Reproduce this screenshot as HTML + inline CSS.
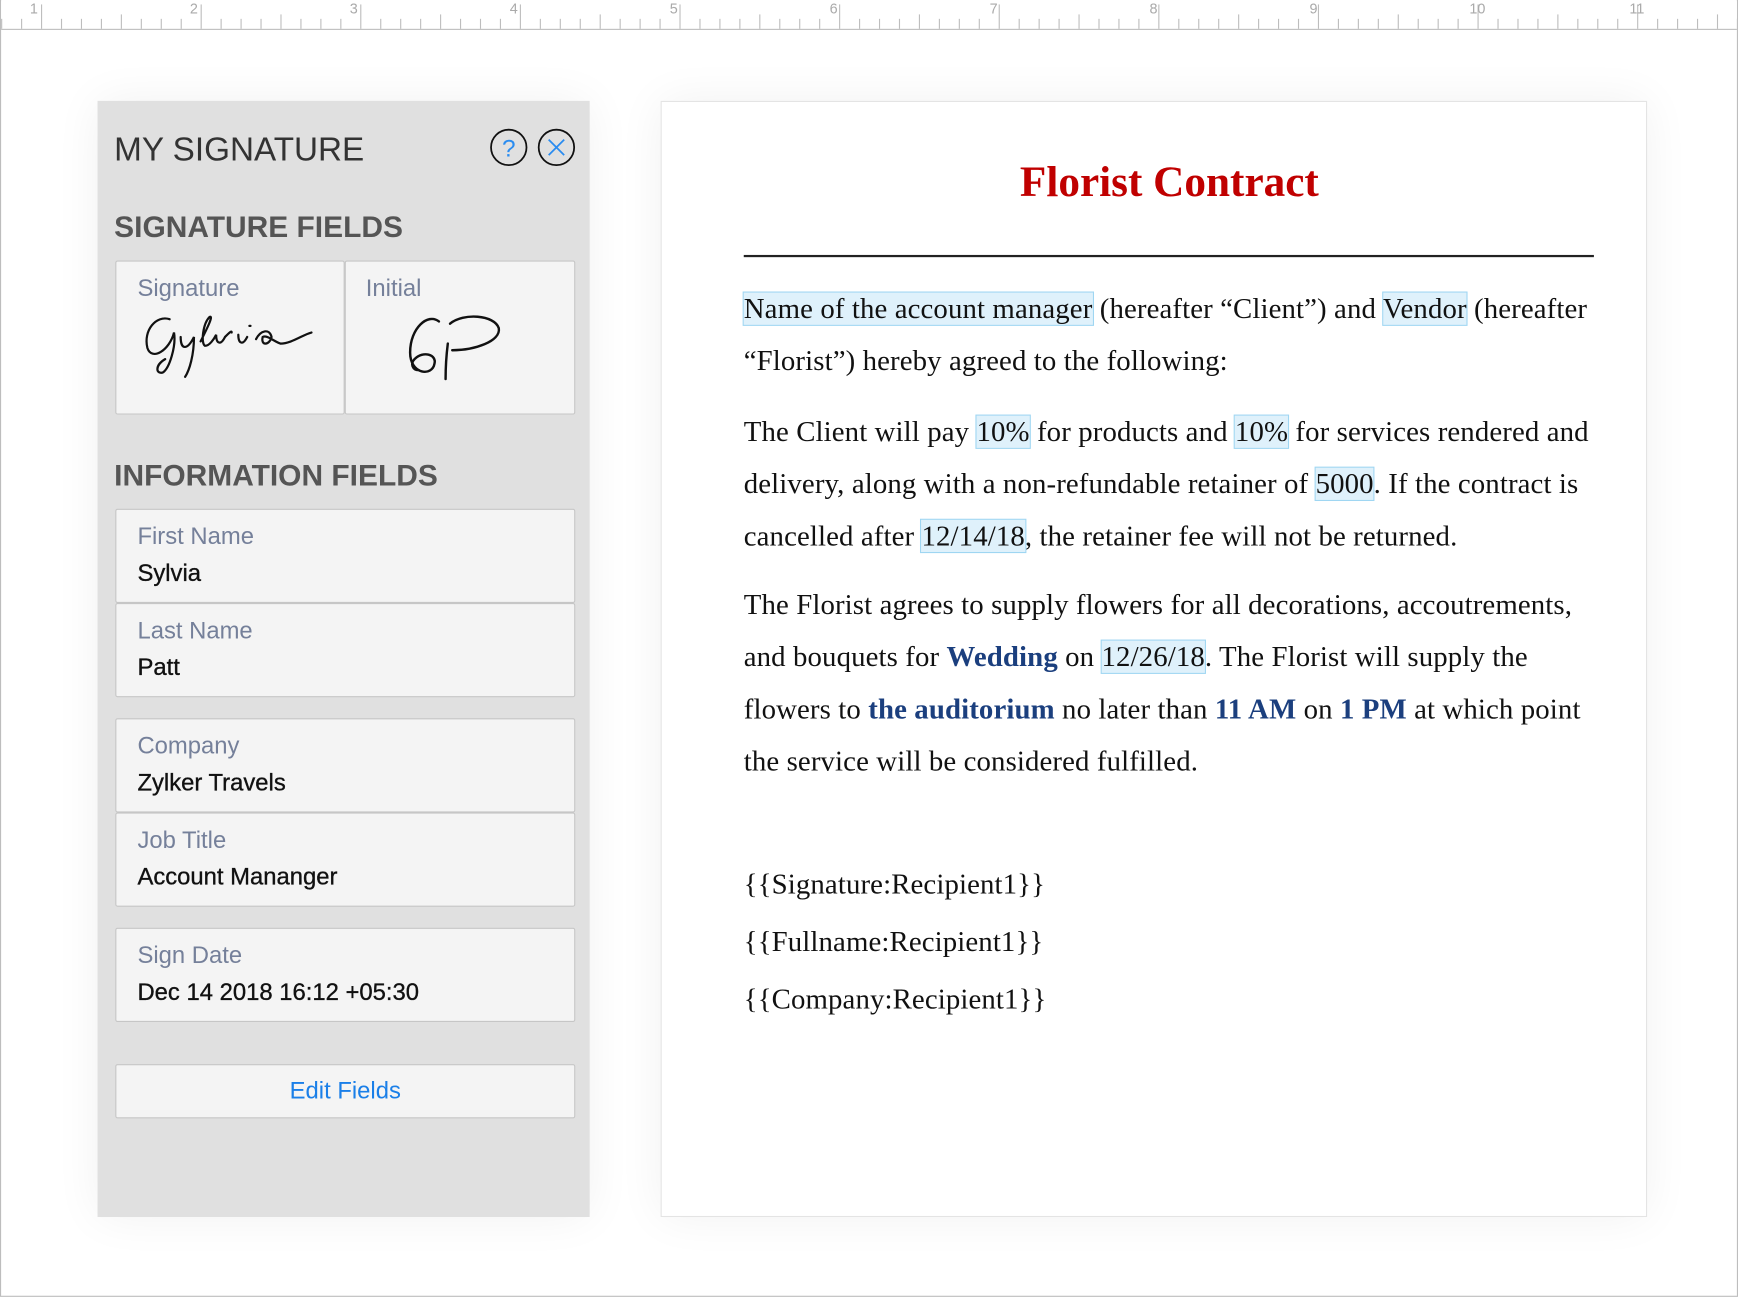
<!DOCTYPE html>
<html><head><meta charset="utf-8"><style>
html,body{margin:0;padding:0;background:#fff;width:1738px;height:1297px;overflow:hidden}
#w{position:absolute;left:0;top:0;width:1568px;height:1170px;transform:scale(1.10842);transform-origin:0 0;font-family:"Liberation Sans",sans-serif}
.frame{position:absolute;left:0;top:0;width:1566px;height:1168px;border:1px solid #bdbdbd}
.ruler{position:absolute;left:1px;top:0;width:1566px;height:26px;border-bottom:1px solid #bdbdbd;background:#fff}
.tick{position:absolute;bottom:0;width:1px;background:#bdbdbd}
.num{position:absolute;top:0;font-size:13px;color:#aaa}
.panel{position:absolute;left:88px;top:91px;width:444px;height:1007px;background:#e0e0e0;box-shadow:0 0 40px rgba(0,0,0,0.06)}
.t{position:absolute;white-space:nowrap}
.box{position:absolute;background:#f4f4f4;border:1px solid #c6c6c6;box-sizing:border-box;border-radius:2px}
.lab{position:absolute;left:19px;top:12px;font-size:21.5px;color:#75809a}
.val{position:absolute;left:19px;top:45px;font-size:21.5px;color:#111;-webkit-text-stroke:0.3px #111}
.doc{position:absolute;left:596px;top:91px;width:890px;height:1007px;background:#fff;border:1px solid #e4e4e4;box-sizing:border-box;box-shadow:0 0 40px rgba(0,0,0,0.06)}
.p{position:absolute;left:671px;font-family:"Liberation Serif",serif;font-size:26px;color:#111;white-space:nowrap;letter-spacing:0.1px}
.h{background:#dff1fb;outline:1px solid #9fd6f2}
.b{color:#1b3f7e;font-weight:bold}
</style></head><body><div id="w">
<div class="frame"></div>
<div class="ruler" id="r"></div>
<div class="panel"></div>
<div class="t" style="left:103px;top:119px;font-size:30px;color:#333;letter-spacing:0px">MY SIGNATURE</div>
<svg class="t" style="left:440px;top:114px" width="84" height="40">
<circle cx="19" cy="19" r="16" fill="none" stroke="#111" stroke-width="1.6"/>
<text x="19" y="27" text-anchor="middle" font-size="22" fill="#2a8cf0" font-family="Liberation Sans">?</text>
<circle cx="62" cy="19" r="16" fill="none" stroke="#111" stroke-width="1.6"/>
<path d="M55 12 L69 26 M69 12 L55 26" stroke="#2a8cf0" stroke-width="1.6"/>
</svg>
<div class="t" style="left:103px;top:190px;font-size:27px;color:#555;font-weight:bold">SIGNATURE FIELDS</div>
<div class="box" style="left:104px;top:235px;width:207px;height:139px"><div class="lab">Signature</div>
<svg style="position:absolute;left:18px;top:40px" width="180" height="70"><path d="M30 12 C18 8 6 22 10 38 C14 50 30 40 34 24 C36 36 30 56 24 60 C18 62 16 54 26 48 M40 28 C40 40 46 40 52 28 C52 44 48 58 44 64 M58 32 C64 20 70 8 66 10 C60 16 58 34 62 36 C66 36 70 30 72 26 C72 34 76 36 80 28 C84 24 86 22 86 24 M92 26 C92 34 96 36 100 28 M102 18 L103 18 M108 30 C112 22 120 20 122 28 C120 36 112 36 114 28 C118 26 124 32 130 34 C140 34 150 26 158 24" fill="none" stroke="#111" stroke-width="2" stroke-linecap="round"/></svg></div>
<div class="box" style="left:311px;top:235px;width:208px;height:139px"><div class="lab" style="left:18px">Initial</div>
<svg style="position:absolute;left:50px;top:40px" width="120" height="75"><path d="M34 14 C24 6 8 20 8 42 C8 62 28 64 30 52 C32 44 20 40 12 48 C8 52 10 58 16 58 M42 34 C40 50 40 60 40 66 M44 16 C56 6 84 8 88 20 C90 32 66 40 46 40" fill="none" stroke="#111" stroke-width="2.2" stroke-linecap="round"/></svg></div>
<div class="t" style="left:103px;top:414px;font-size:27px;color:#555;font-weight:bold">INFORMATION FIELDS</div>
<div class="box" style="left:104px;top:459px;width:415px;height:85px"><div class="lab">First Name</div><div class="val">Sylvia</div></div>
<div class="box" style="left:104px;top:544px;width:415px;height:85px"><div class="lab">Last Name</div><div class="val">Patt</div></div>
<div class="box" style="left:104px;top:648px;width:415px;height:85px"><div class="lab">Company</div><div class="val">Zylker Travels</div></div>
<div class="box" style="left:104px;top:733px;width:415px;height:85px"><div class="lab">Job Title</div><div class="val">Account Mananger</div></div>
<div class="box" style="left:104px;top:837px;width:415px;height:85px"><div class="lab">Sign Date</div><div class="val">Dec 14 2018 16:12 +05:30</div></div>
<div class="box" style="left:104px;top:960px;width:415px;height:49px;text-align:center;font-size:21.5px;color:#1a7fe8;line-height:47px">Edit Fields</div>
<div class="doc"></div>
<div class="t" style="left:624px;width:862px;text-align:center;top:142px;font-family:'Liberation Serif',serif;font-weight:bold;font-size:39px;color:#c00000">Florist Contract</div>
<div class="t" style="left:671px;top:230px;width:767px;height:2px;background:#222"></div>
<div class="p" style="top:264px"><span class="h">Name of the account manager</span> (hereafter “Client”) and <span class="h">Vendor</span> (hereafter</div>
<div class="p" style="top:311px">“Florist”) hereby agreed to the following:</div>
<div class="p" style="top:375px">The Client will pay <span class="h">10%</span> for products and <span class="h">10%</span> for services rendered and</div>
<div class="p" style="top:422px">delivery, along with a non-refundable retainer of <span class="h">5000</span>. If the contract is</div>
<div class="p" style="top:469px">cancelled after <span class="h">12/14/18</span>, the retainer fee will not be returned.</div>
<div class="p" style="top:531px">The Florist agrees to supply flowers for all decorations, accoutrements,</div>
<div class="p" style="top:578px">and bouquets for <span class="b">Wedding</span> on <span class="h">12/26/18</span>. The Florist will supply the</div>
<div class="p" style="top:625px">flowers to <span class="b">the auditorium</span> no later than <span class="b">11 AM</span> on <span class="b">1 PM</span> at which point</div>
<div class="p" style="top:672px">the service will be considered fulfilled.</div>
<div class="p" style="top:783px">{{Signature:Recipient1}}</div>
<div class="p" style="top:835px">{{Fullname:Recipient1}}</div>
<div class="p" style="top:887px">{{Company:Recipient1}}</div>
</div>
<script>
var r=document.getElementById('r'),h='';
for(var i=0;i<100;i++){var x=36-144+i*18;if(x<0||x>1566)continue;var k=(i%8);var ht=k==0?22:(k==4?13:9);
h+='<div class="tick" style="left:'+x+'px;height:'+ht+'px"></div>';}
for(var n=1;n<=11;n++){h+='<div class="num" style="left:'+(26+(n-1)*144.3)+'px">'+n+'</div>';}
r.innerHTML=h;
</script>
</body></html>
